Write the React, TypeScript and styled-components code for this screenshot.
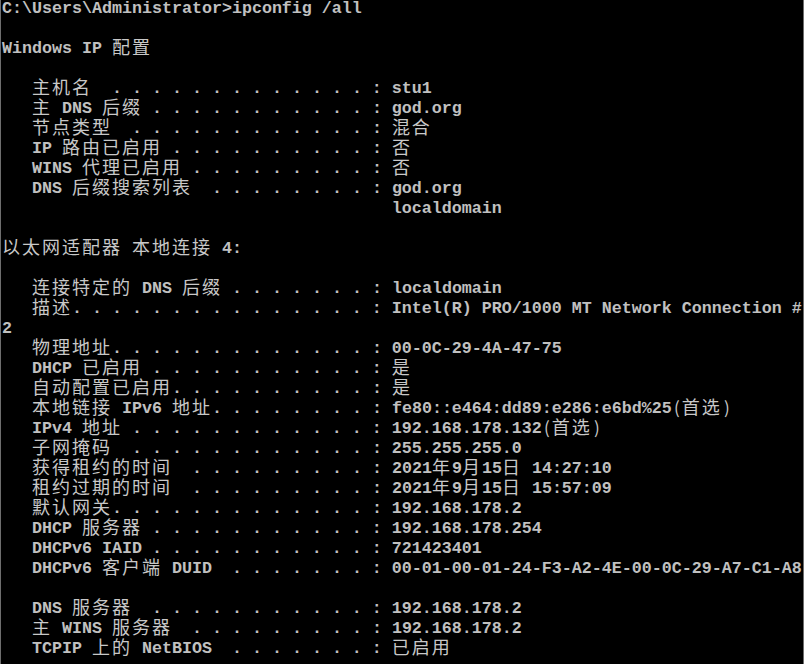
import React from "react";
import styled, { createGlobalStyle } from "styled-components";

const GlobalStyle = createGlobalStyle`
  html, body {
    margin: 0;
    padding: 0;
    background: #000;
  }
`;

const Window = styled.div`
  box-sizing: border-box;
  width: 804px;
  height: 664px;
  background: #000;
  border-left: 1px solid #6e6e6e;
  border-right: 1px solid #6e6e6e;
  padding-left: 1px;
  overflow: hidden;
`;

const Screen = styled.div`
  margin-top: -1px;
  color: #c0c0c0;
  font-family: "Liberation Mono", "DejaVu Sans Mono", monospace;
  font-size: 16.667px;
  font-weight: 700;
  line-height: 20px;
`;

const Row = styled.div`
  height: 20px;
  white-space: pre;
  overflow: visible;
`;

const Ascii = styled.span``;

const Wide = styled.span`
  font-family: "Noto Sans CJK SC", sans-serif;
  font-weight: 400;
  font-size: 18px;
  letter-spacing: 2px;
  line-height: 14px;
  vertical-align: -1px;
  color: #c8c8c8;
`;

const Thin = styled.span`
  display: inline-block;
  width: 10px;
  text-align: center;
  font-family: "Noto Sans CJK SC", sans-serif;
  font-weight: 400;
  font-size: 17px;
  line-height: 14px;
  vertical-align: -1px;
  color: #c8c8c8;
`;

const isWide = (c: string) => c.charCodeAt(0) > 0x2e80;
const width = (s: string) =>
  Array.from(s).reduce((n, c) => n + (isWide(c) ? 2 : 1), 0);

type Spec =
  | { text: string }
  | { label: string; dot: number; value: string };

const entry = (label: string, dot: number, value: string) => {
  let s = "   " + label;
  let col = 3 + width(label);
  while (col < dot) {
    s += " ";
    col++;
  }
  while (col < 36) {
    s += col % 2 === 1 ? "." : " ";
    col++;
  }
  return s + " : " + value;
};

const specs: Spec[] = [
  { text: "C:\\Users\\Administrator>ipconfig /all" },
  { text: "" },
  { text: "Windows IP 配置" },
  { text: "" },
  { label: "主机名", dot: 11, value: "stu1" },
  { label: "主 DNS 后缀", dot: 15, value: "god.org" },
  { label: "节点类型", dot: 13, value: "混合" },
  { label: "IP 路由已启用", dot: 17, value: "否" },
  { label: "WINS 代理已启用", dot: 19, value: "否" },
  { label: "DNS 后缀搜索列表", dot: 21, value: "god.org" },
  { text: " ".repeat(39) + "localdomain" },
  { text: "" },
  { text: "以太网适配器 本地连接 4:" },
  { text: "" },
  { label: "连接特定的 DNS 后缀", dot: 23, value: "localdomain" },
  { label: "描述", dot: 7, value: "Intel(R) PRO/1000 MT Network Connection #" },
  { text: "2" },
  { label: "物理地址", dot: 11, value: "00-0C-29-4A-47-75" },
  { label: "DHCP 已启用", dot: 15, value: "是" },
  { label: "自动配置已启用", dot: 17, value: "是" },
  { label: "本地链接 IPv6 地址", dot: 21, value: "fe80::e464:dd89:e286:e6bd%25(首选)" },
  { label: "IPv4 地址", dot: 13, value: "192.168.178.132(首选)" },
  { label: "子网掩码", dot: 13, value: "255.255.255.0" },
  { label: "获得租约的时间", dot: 19, value: "2021年9月15日 14:27:10" },
  { label: "租约过期的时间", dot: 19, value: "2021年9月15日 15:57:09" },
  { label: "默认网关", dot: 11, value: "192.168.178.2" },
  { label: "DHCP 服务器", dot: 15, value: "192.168.178.254" },
  { label: "DHCPv6 IAID", dot: 15, value: "721423401" },
  { label: "DHCPv6 客户端 DUID", dot: 23, value: "00-01-00-01-24-F3-A2-4E-00-0C-29-A7-C1-A8" },
  { text: "" },
  { label: "DNS 服务器", dot: 15, value: "192.168.178.2" },
  { label: "主 WINS 服务器", dot: 19, value: "192.168.178.2" },
  { label: "TCPIP 上的 NetBIOS", dot: 23, value: "已启用" },
];

type Run = { kind: "ascii" | "wide" | "thin"; text: string };

const tokenize = (s: string): Run[] => {
  const chars = Array.from(s);
  const runs: Run[] = [];
  chars.forEach((c, i) => {
    let kind: Run["kind"] = isWide(c) ? "wide" : "ascii";
    if (c === "(" && chars[i + 1] && isWide(chars[i + 1])) kind = "thin";
    if (c === ")" && chars[i - 1] && isWide(chars[i - 1])) kind = "thin";
    const last = runs[runs.length - 1];
    if (last && last.kind === kind && kind !== "thin") last.text += c;
    else runs.push({ kind, text: c });
  });
  return runs;
};

const Line: React.FC<{ text: string }> = ({ text }) => (
  <Row>
    {tokenize(text).map((r, i) =>
      r.kind === "wide" ? (
        <Wide key={i}>{r.text}</Wide>
      ) : r.kind === "thin" ? (
        <Thin key={i}>{r.text}</Thin>
      ) : (
        <Ascii key={i}>{r.text}</Ascii>
      )
    )}
    {text === "" ? " " : null}
  </Row>
);

export default function App() {
  return (
    <>
      <GlobalStyle />
      <Window>
        <Screen>
          {specs.map((s, i) => (
            <Line
              key={i}
              text={"text" in s ? s.text : entry(s.label, s.dot, s.value)}
            />
          ))}
        </Screen>
      </Window>
    </>
  );
}
